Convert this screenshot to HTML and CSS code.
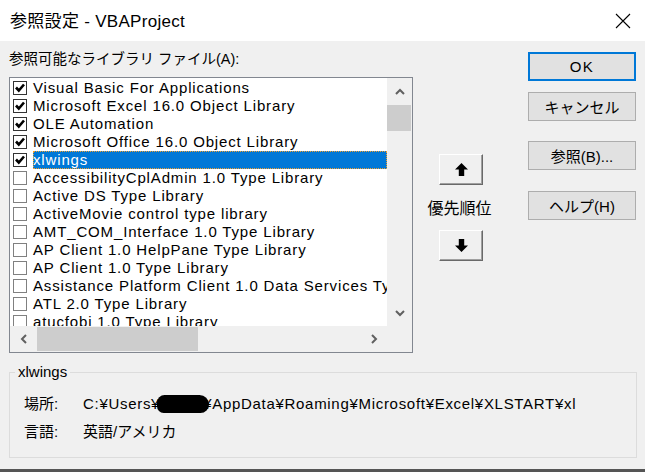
FILE: index.html
```html
<!DOCTYPE html>
<html>
<head>
    <title>参照設定 - VBAProject</title>
    <link rel="stylesheet" href="styles.css">
</head>
<body>
    <div class="window">
        <div class="titlebar">
            <span class="title">参照設定 - VBAProject</span>
            <svg class="close" width="16" height="16" viewBox="0 0 16 16">
                <path d="M1 1 L15 15 M15 1 L1 15" stroke="#000" stroke-width="1.1" fill="none"/>
            </svg>
        </div>

        <div class="content">
            <div class="top">
                <div class="libs">
                    <div class="caption">参照可能なライブラリ ファイル(A):</div>
                    <div class="listbox">
                        <div class="items">
                            <div class="row"><span class="check on"></span><span class="name">Visual Basic For Applications</span></div>
                            <div class="row"><span class="check on"></span><span class="name">Microsoft Excel 16.0 Object Library</span></div>
                            <div class="row"><span class="check on"></span><span class="name">OLE Automation</span></div>
                            <div class="row"><span class="check on"></span><span class="name">Microsoft Office 16.0 Object Library</span></div>
                            <div class="row selected"><span class="check on"></span><span class="name">xlwings</span></div>
                            <div class="row"><span class="check"></span><span class="name">AccessibilityCplAdmin 1.0 Type Library</span></div>
                            <div class="row"><span class="check"></span><span class="name">Active DS Type Library</span></div>
                            <div class="row"><span class="check"></span><span class="name">ActiveMovie control type library</span></div>
                            <div class="row"><span class="check"></span><span class="name">AMT_COM_Interface 1.0 Type Library</span></div>
                            <div class="row"><span class="check"></span><span class="name">AP Client 1.0 HelpPane Type Library</span></div>
                            <div class="row"><span class="check"></span><span class="name">AP Client 1.0 Type Library</span></div>
                            <div class="row"><span class="check"></span><span class="name">Assistance Platform Client 1.0 Data Services Type Library</span></div>
                            <div class="row"><span class="check"></span><span class="name">ATL 2.0 Type Library</span></div>
                            <div class="row"><span class="check"></span><span class="name">atucfobj 1.0 Type Library</span></div>
                        </div>
                        <div class="vscroll">
                            <div class="sbtn">
                                <svg width="10" height="7" viewBox="0 0 10 7"><path d="M1 6 L5 2 L9 6" stroke="#606060" stroke-width="2" fill="none"/></svg>
                            </div>
                            <div class="vthumb"></div>
                            <div class="track"></div>
                            <div class="sbtn">
                                <svg width="10" height="7" viewBox="0 0 10 7"><path d="M1 1 L5 5 L9 1" stroke="#606060" stroke-width="2" fill="none"/></svg>
                            </div>
                        </div>
                        <div class="hscroll">
                            <div class="sbtn">
                                <svg width="7" height="10" viewBox="0 0 7 10"><path d="M6 1 L2 5 L6 9" stroke="#606060" stroke-width="2" fill="none"/></svg>
                            </div>
                            <div class="hthumb"></div>
                            <div class="track"></div>
                            <div class="sbtn">
                                <svg width="7" height="10" viewBox="0 0 7 10"><path d="M1 1 L5 5 L1 9" stroke="#606060" stroke-width="2" fill="none"/></svg>
                            </div>
                        </div>
                        <div class="corner"></div>
                    </div>
                </div>

                <div class="priority">
                    <button class="arrow">
                        <svg width="13" height="13" viewBox="0 0 12 12"><path d="M6 0 L12 6 L8.5 6 L8.5 12 L3.5 12 L3.5 6 L0 6 Z" fill="#000"/></svg>
                    </button>
                    <div class="priority-label">優先順位</div>
                    <button class="arrow">
                        <svg width="13" height="13" viewBox="0 0 12 12"><path d="M6 12 L12 6 L8.5 6 L8.5 0 L3.5 0 L3.5 6 L0 6 Z" fill="#000"/></svg>
                    </button>
                </div>

                <div class="actions">
                    <button class="btn default">OK</button>
                    <button class="btn cancel">キャンセル</button>
                    <button class="btn browse">参照(B)...</button>
                    <button class="btn help">ヘルプ(H)</button>
                </div>
            </div>

            <fieldset class="info">
                <legend>xlwings</legend>
                <div class="info-grid">
                    <span class="key">場所:</span>
                    <span class="value path">C:¥Users¥<span class="redacted"></span>¥AppData¥Roaming¥Microsoft¥Excel¥XLSTART¥xl</span>
                    <span class="key">言語:</span>
                    <span class="value">英語/アメリカ</span>
                </div>
            </fieldset>
        </div>
        <div class="frame-bottom"></div>
    </div>
</body>
</html>
```

FILE: styles.css
```css
body {
    margin: 0;
    font-family: "Liberation Sans", "Noto Sans CJK JP", sans-serif;
    color: #000;
}
.window {
    width: 645px;
    height: 472px;
    background-color: #f0f0f0;
    display: flex;
    flex-direction: column;
    overflow: hidden;
}
.titlebar {
    height: 41px;
    background-color: #fff;
    display: flex;
    align-items: center;
    justify-content: space-between;
    padding: 0 14px 2px 10px;
    box-sizing: border-box;
}
.title {
    font-size: 17px;
    letter-spacing: 0.3px;
}
.close {
    margin-top: 2px;
}
.content {
    flex: 1;
    padding: 8px 8px 0 9px;
}
.top {
    display: flex;
}
.libs {
    width: 404px;
}
.caption {
    font-size: 14.5px;
    line-height: 20px;
    margin-bottom: 8px;
}
.listbox {
    display: grid;
    grid-template-columns: 377px 25px;
    grid-template-rows: 248px 26px;
    border: 1px solid #828790;
    background-color: #fff;
}
.items {
    overflow: hidden;
    padding-top: 1px;
    font-size: 15px;
    letter-spacing: 0.85px;
    white-space: nowrap;
}
.row {
    display: flex;
    align-items: center;
    height: 18px;
}
.check {
    flex: none;
    width: 12px;
    height: 12px;
    margin: 0 6px 0 3px;
    border: 1px solid #808080;
    background-color: #fff;
}
.check.on {
    border-color: #333;
    background: #fff url("data:image/svg+xml,%3Csvg xmlns='http://www.w3.org/2000/svg' width='12' height='12' viewBox='0 0 12 12'%3E%3Cpath d='M2 5.5 L4.8 8.5 L10 2.5' stroke='%23000' stroke-width='2.6' fill='none'/%3E%3C/svg%3E") no-repeat center;
}
.name {
    flex: 1;
    height: 18px;
    line-height: 18px;
}
.selected .name {
    background-color: #0078d7;
    color: #fff;
    outline: 1px dotted #f0a030;
    outline-offset: -1px;
}
.vscroll {
    display: flex;
    flex-direction: column;
    background-color: #f0f0f0;
}
.hscroll {
    display: flex;
    background-color: #f0f0f0;
}
.corner {
    background-color: #f0f0f0;
}
.sbtn {
    flex: none;
    width: 26px;
    height: 26px;
    display: flex;
    align-items: center;
    justify-content: center;
}
.vscroll .sbtn {
    width: 25px;
}
.track {
    flex: 1;
}
.vthumb {
    height: 26px;
    margin: 1px 1px 0 0;
    background-color: #cdcdcd;
}
.hthumb {
    width: 161px;
    margin: 1px 0 1px 1px;
    background-color: #cdcdcd;
}
.priority {
    width: 96px;
    padding-top: 105px;
    display: flex;
    flex-direction: column;
    align-items: center;
}
.arrow {
    width: 44px;
    height: 31px;
    padding: 0;
    background-color: #f0f0f0;
    border: 1px solid;
    border-color: #fff #696969 #696969 #fff;
    box-shadow: inset -1px -1px 0 #a0a0a0;
    display: flex;
    align-items: center;
    justify-content: center;
}
.priority-label {
    font-size: 16px;
    line-height: 20px;
    margin: 14px 0 11px;
    padding-right: 3px;
}
.actions {
    width: 108px;
    margin-left: 19px;
    padding-top: 3px;
    display: flex;
    flex-direction: column;
}
.btn {
    height: 29px;
    padding: 0;
    font-family: "Liberation Sans", "Noto Sans CJK JP", sans-serif;
    font-size: 15px;
    background-color: #e1e1e1;
    border: 1px solid #adadad;
    color: #000;
}
.btn.default {
    border: 2px solid #0078d7;
    letter-spacing: 1.5px;
}
.btn.cancel {
    margin-top: 11px;
}
.btn.browse {
    margin-top: 20px;
}
.btn.help {
    margin-top: 21px;
}
.info {
    margin: 10px 0 11px 0;
    padding: 0 5px 11px 5px;
    border: 1px solid #dcdcdc;
    height: 95px;
    box-sizing: border-box;
}
.info legend {
    padding: 0 3px;
    font-size: 15px;
    line-height: 18px;
}
.info-grid {
    display: grid;
    grid-template-columns: 59px auto;
    padding: 9px 0 0 9px;
    font-size: 15px;
    line-height: 28px;
}
.path {
    letter-spacing: 0.7px;
}
.redacted {
    display: inline-block;
    width: 52px;
    height: 18px;
    margin: 0 -6px 0 -3px;
    vertical-align: -4px;
    background-color: #000;
    border-radius: 8px 10px 9px 7px;
}
.frame-bottom {
    height: 3px;
    background-color: #555;
}
```
